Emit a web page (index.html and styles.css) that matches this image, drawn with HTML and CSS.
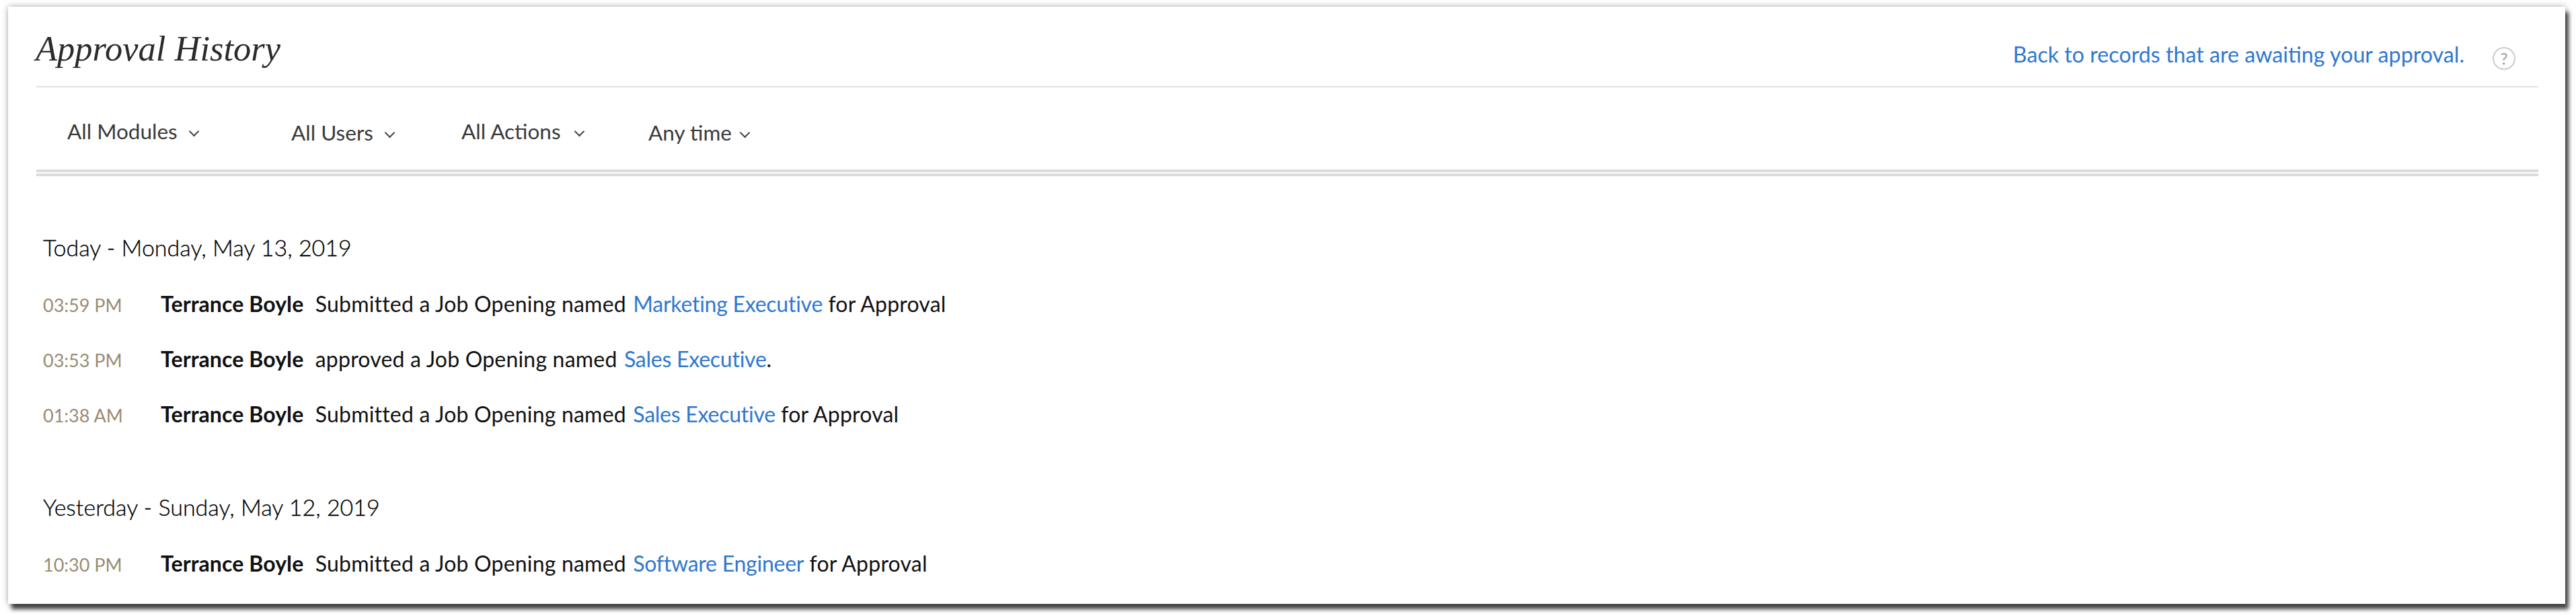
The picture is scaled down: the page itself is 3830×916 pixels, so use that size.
FILE: index.html
```html
<!DOCTYPE html>
<html lang="en">
<head>
  <meta charset="UTF-8">
  <meta name="viewport" content="width=device-width, initial-scale=1.0">
  <title>Approval History</title>
  <link rel="stylesheet" href="styles.css">
</head>
<body>

  <div class="ventana">
    <div class="cabecera">
      <h1 class="titulo">Approval History</h1>
      <a class="volver" href="#">Back to records that are awaiting your approval.</a>
      <span class="ayuda">?</span>
    </div>

    <div class="filtros">
      <div class="filtro f-modules">All Modules <span class="flecha"></span></div>
      <div class="filtro bajo f-users">All Users <span class="flecha"></span></div>
      <div class="filtro f-actions">All Actions <span class="flecha"></span></div>
      <div class="filtro bajo f-time">Any time <span class="flecha"></span></div>
    </div>
    <div class="doble"></div>

    <div class="grupo hoy">
      <h2 class="fecha">Today - Monday, May 13, 2019</h2>
      <div class="fila">
        <span class="hora">03:59 PM</span>
        <span class="texto"><b>Terrance Boyle</b> Submitted a Job Opening named <a href="#">Marketing Executive</a> for Approval</span>
      </div>
      <div class="fila">
        <span class="hora">03:53 PM</span>
        <span class="texto"><b>Terrance Boyle</b> approved a Job Opening named <a href="#">Sales Executive</a>.</span>
      </div>
      <div class="fila">
        <span class="hora">01:38 AM</span>
        <span class="texto"><b>Terrance Boyle</b> Submitted a Job Opening named <a href="#">Sales Executive</a> for Approval</span>
      </div>
    </div>

    <div class="grupo ayer">
      <h2 class="fecha">Yesterday - Sunday, May 12, 2019</h2>
      <div class="fila">
        <span class="hora">10:30 PM</span>
        <span class="texto"><b>Terrance Boyle</b> Submitted a Job Opening named <a href="#">Software Engineer</a> for Approval</span>
      </div>
    </div>
  </div>

</body>
</html>
```

FILE: styles.css
```css
html, body {
  height: 100%;
}

body {
  margin: 0;
  padding: 10px 16px 18px 12px;
  box-sizing: border-box;
  background-color: #fff;
  font-family: 'Lato', sans-serif;
  color: #111;
}

.ventana {
  height: 888px;
  background-color: #fff;
  box-shadow: 5px 8px 6px rgba(0,0,0,0.7), 0 0 9px rgba(0,0,0,0.35);
  overflow: hidden;
}

.cabecera {
  display: flex;
  align-items: flex-start;
  height: 118px;
  margin: 0 40px 0 42px;
  border-bottom: 2px solid #e2e2e2;
}

.titulo {
  margin: 32px 0 0 -1px;
  font-family: 'Liberation Serif', serif;
  font-size: 52.5px;
  font-style: italic;
  font-weight: normal;
  line-height: 60px;
  color: #2b2b2b;
}

.volver {
  margin: 52px 0 0 auto;
  font-size: 32.2px;
  line-height: 38px;
  color: #2f78d0;
  text-decoration: none;
}

.ayuda {
  width: 30px;
  height: 30px;
  margin: 60px 34px 0 42px;
  border: 2px solid #ccc;
  border-radius: 50%;
  font-size: 24px;
  line-height: 30px;
  text-align: center;
  color: #999;
}

.filtros {
  display: flex;
  align-items: flex-start;
  height: 122px;
  margin: 0 40px 0 42px;
  box-sizing: border-box;
  padding: 47px 0 0 46px;
  font-size: 31.5px;
  color: #3a3a3a;
}

.filtro {
  line-height: 36px;
  white-space: nowrap;
}

.bajo {
  padding-top: 2px;
}

.f-modules { width: 333px; }
.f-users { width: 253px; }
.f-actions { width: 278px; }

.flecha {
  display: inline-block;
  width: 9px;
  height: 9px;
  margin: 0 4px 6px 11px;
  border-right: 2px solid #444;
  border-bottom: 2px solid #444;
  transform: rotate(45deg);
}

.f-actions .flecha {
  margin-left: 14px;
}

.f-time .flecha {
  margin-left: 6px;
}

.doble {
  height: 2px;
  margin: 0 40px 0 42px;
  border-top: 4px solid #dcdcdc;
  border-bottom: 4px solid #dcdcdc;
}

.grupo {
  padding-left: 52px;
}

.hoy {
  padding-top: 84px;
}

.ayer {
  padding-top: 56px;
}

.fecha {
  margin: 0 0 40px;
  font-size: 34px;
  font-weight: 300;
  line-height: 44px;
  color: #000;
  -webkit-text-stroke: 0.3px #000;
}

.fila {
  display: flex;
  align-items: baseline;
  height: 82px;
  line-height: 44px;
  font-size: 32px;
}

.hora {
  width: 175px;
  flex: none;
  font-size: 27px;
  color: #9a8b72;
}

.texto {
  letter-spacing: 0.2px;
}

.texto b {
  margin-right: 9px;
  font-weight: bold;
  letter-spacing: 0.1px;
}

.texto a {
  margin-left: 2px;
  letter-spacing: -0.25px;
  color: #2f78d0;
  text-decoration: none;
}
```
